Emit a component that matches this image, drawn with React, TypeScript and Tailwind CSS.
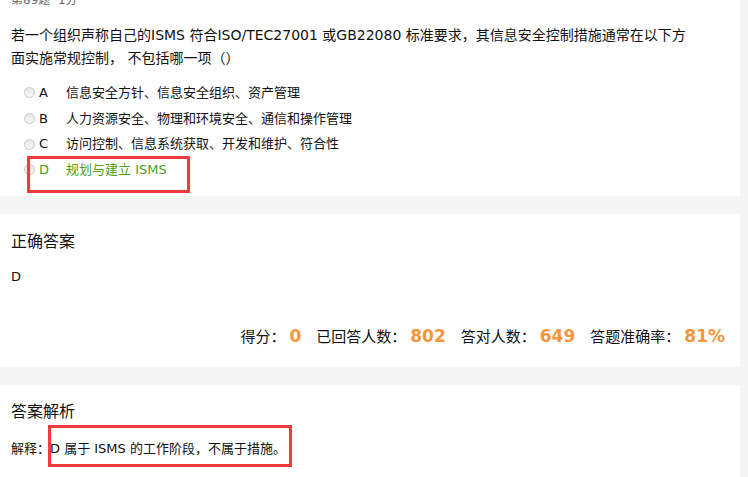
import * as React from 'react'

// ── Types ─────────────────────────────────────────────────────────────────────
interface Option {
  key:   string
  label: string
  hit?:  boolean
}

const options: Option[] = [
  { key: 'A', label: '信息安全方针、信息安全组织、资产管理' },
  { key: 'B', label: '人力资源安全、物理和环境安全、通信和操作管理' },
  { key: 'C', label: '访问控制、信息系统获取、开发和维护、符合性' },
  { key: 'D', label: '规划与建立 ISMS', hit: true },
]

const stats = [
  { label: '得分：', value: '0' },
  { label: '已回答人数：', value: '802' },
  { label: '答对人数：', value: '649' },
  { label: '答题准确率：', value: '81%' },
]

const font = "font-['DejaVu_Sans','Noto_Sans_CJK_SC',sans-serif]"

// ── Radio ─────────────────────────────────────────────────────────────────────
function Radio() {
  return (
    <span className="block h-[11px] w-[11px] shrink-0 rounded-full border border-[#c9c9c9] bg-gradient-to-b from-[#e6e6e6] to-[#f7f7f7]" />
  )
}

// ── App ───────────────────────────────────────────────────────────────────────
export default function App() {
  return (
    <div className={`${font} flex h-[477px] w-[748px] overflow-hidden bg-[#f5f5f5] text-[#111]`}>
      <div className="flex w-[740px] flex-col gap-[18px]">
        {/* Question */}
        <section className="relative h-[196px] shrink-0 bg-white px-[11px]">
          <div className="-mt-[7px] text-[12px] leading-[14px] text-[#666]">第89题&nbsp;&nbsp;1分</div>
          <div className="mt-[17px] text-[14px] leading-[23px]">
            <div className="whitespace-nowrap">若一个组织声称自己的ISMS 符合ISO/TEC27001 或GB22080 标准要求，其信息安全控制措施通常在以下方</div>
            <div className="whitespace-nowrap">面实施常规控制， 不包括哪一项（）</div>
          </div>
          <ul className="mt-[10px] pl-[13px]">
            {options.map(o => (
              <li key={o.key} className="flex h-[25.7px] items-center text-[13px]">
                <Radio />
                <span className={`ml-[4px] w-[27px] ${o.hit ? 'text-[#4d9f17]' : ''}`}>{o.key}</span>
                <span className={o.hit ? 'text-[#4d9f17]' : ''}>{o.label}</span>
              </li>
            ))}
          </ul>
          {/* annotation */}
          <span className="absolute left-[27px] top-[156px] h-[37px] w-[163px] border-[3px] border-[#f43b3b]" />
        </section>

        {/* Answer */}
        <section className="flex h-[153px] shrink-0 flex-col bg-white px-[11px] pt-[16px]">
          <h2 className="text-[16px] leading-[24px]">正确答案</h2>
          <div className="mt-[13px] text-[13px] leading-[20px]">D</div>
          <div className="mt-[37px] flex items-center justify-end gap-[15px] pr-[4px] text-[15px] leading-[24px]">
            {stats.map(s => (
              <span key={s.label} className="flex items-baseline">
                <span>{s.label}</span>
                <span className="ml-[4px] text-[17px] font-bold text-[#f7953d]">{s.value}</span>
              </span>
            ))}
          </div>
        </section>

        {/* Analysis */}
        <section className="relative flex-1 bg-white px-[11px] pt-[15px]">
          <h2 className="text-[16px] leading-[24px]">答案解析</h2>
          <div className="mt-[15px] text-[13px] leading-[20px]">解释：D 属于 ISMS 的工作阶段，不属于措施。</div>
          <span className="absolute left-[48px] top-[40px] h-[42px] w-[244px] border-[3px] border-[#f43b3b]" />
        </section>
      </div>
    </div>
  )
}
